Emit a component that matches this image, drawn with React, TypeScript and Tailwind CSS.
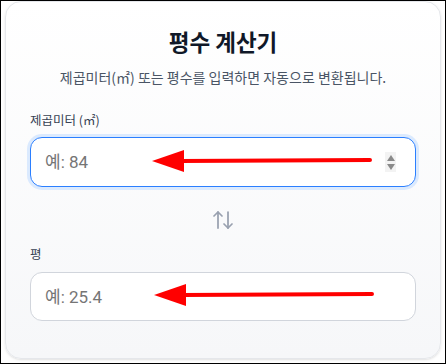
import React from 'react';
import { ArrowUpDown } from 'lucide-react';

const RedArrow = ({ className }: { className: string }) => (
    <svg className={className} width="224" height="24" viewBox="0 0 224 24" fill="none">
        <line x1="30" y1="12" x2="220" y2="11" stroke="#ff0000" strokeWidth="4" strokeLinecap="round" />
        <polygon points="2,12 34,1 34,23" fill="#ff0000" />
    </svg>
);

export default function App() {
    return (
        <div
            className="w-[446px] h-[364px] bg-white border border-black overflow-hidden px-1 pt-0"
            style={{ fontFamily: '"Noto Sans CJK KR", "Noto Sans", sans-serif' }}
        >
            <div className="h-[358px] rounded-2xl border border-gray-200 bg-gradient-to-b from-white to-[#f6f7f9] shadow-sm px-6 pt-[23px]">
                <h1 className="text-center text-[22.5px] font-bold leading-[32px] text-gray-900">평수 계산기</h1>
                <p className="mt-[10px] text-center text-[14px] leading-[20px] text-gray-600">
                    제곱미터(㎡) 또는 평수를 입력하면 자동으로 변환됩니다.
                </p>

                <label className="mt-[23px] block text-[12.5px] leading-[20px] text-gray-700">제곱미터 (㎡)</label>
                <div className="relative mt-[7px]">
                    <input
                        type="text"
                        placeholder="예: 84"
                        className="w-full h-[50px] rounded-xl border border-blue-500 ring-[3px] ring-blue-100 bg-white px-[14px] text-[17px] placeholder:text-[#757575] outline-none"
                        style={{ fontFamily: 'Roboto, "Noto Sans CJK KR", sans-serif' }}
                    />
                    <div className="absolute right-[20px] top-[15px] flex h-[20px] w-[11px] flex-col items-center justify-center gap-[3px] bg-[#f3f3f3]">
                        <span className="block h-0 w-0 border-x-[4px] border-b-[6px] border-x-transparent border-b-[#8a8a8a]" />
                        <span className="block h-0 w-0 border-x-[4px] border-t-[6px] border-x-transparent border-t-[#8a8a8a]" />
                    </div>
                    <RedArrow className="absolute left-[120px] top-[12px]" />
                </div>

                <div className="flex justify-center pt-[21px] pb-[12px]">
                    <ArrowUpDown className="h-[24px] w-[24px] text-gray-400" strokeWidth={1.75} />
                </div>

                <label className="block text-[12.5px] leading-[20px] text-gray-700">평</label>
                <div className="relative mt-[8px]">
                    <input
                        type="text"
                        placeholder="예: 25.4"
                        className="w-full h-[49px] rounded-xl border border-gray-300 bg-white px-[14px] text-[17px] placeholder:text-[#757575] outline-none"
                        style={{ fontFamily: 'Roboto, "Noto Sans CJK KR", sans-serif' }}
                    />
                    <RedArrow className="absolute left-[122px] top-[11px]" />
                </div>
            </div>
        </div>
    );
}
